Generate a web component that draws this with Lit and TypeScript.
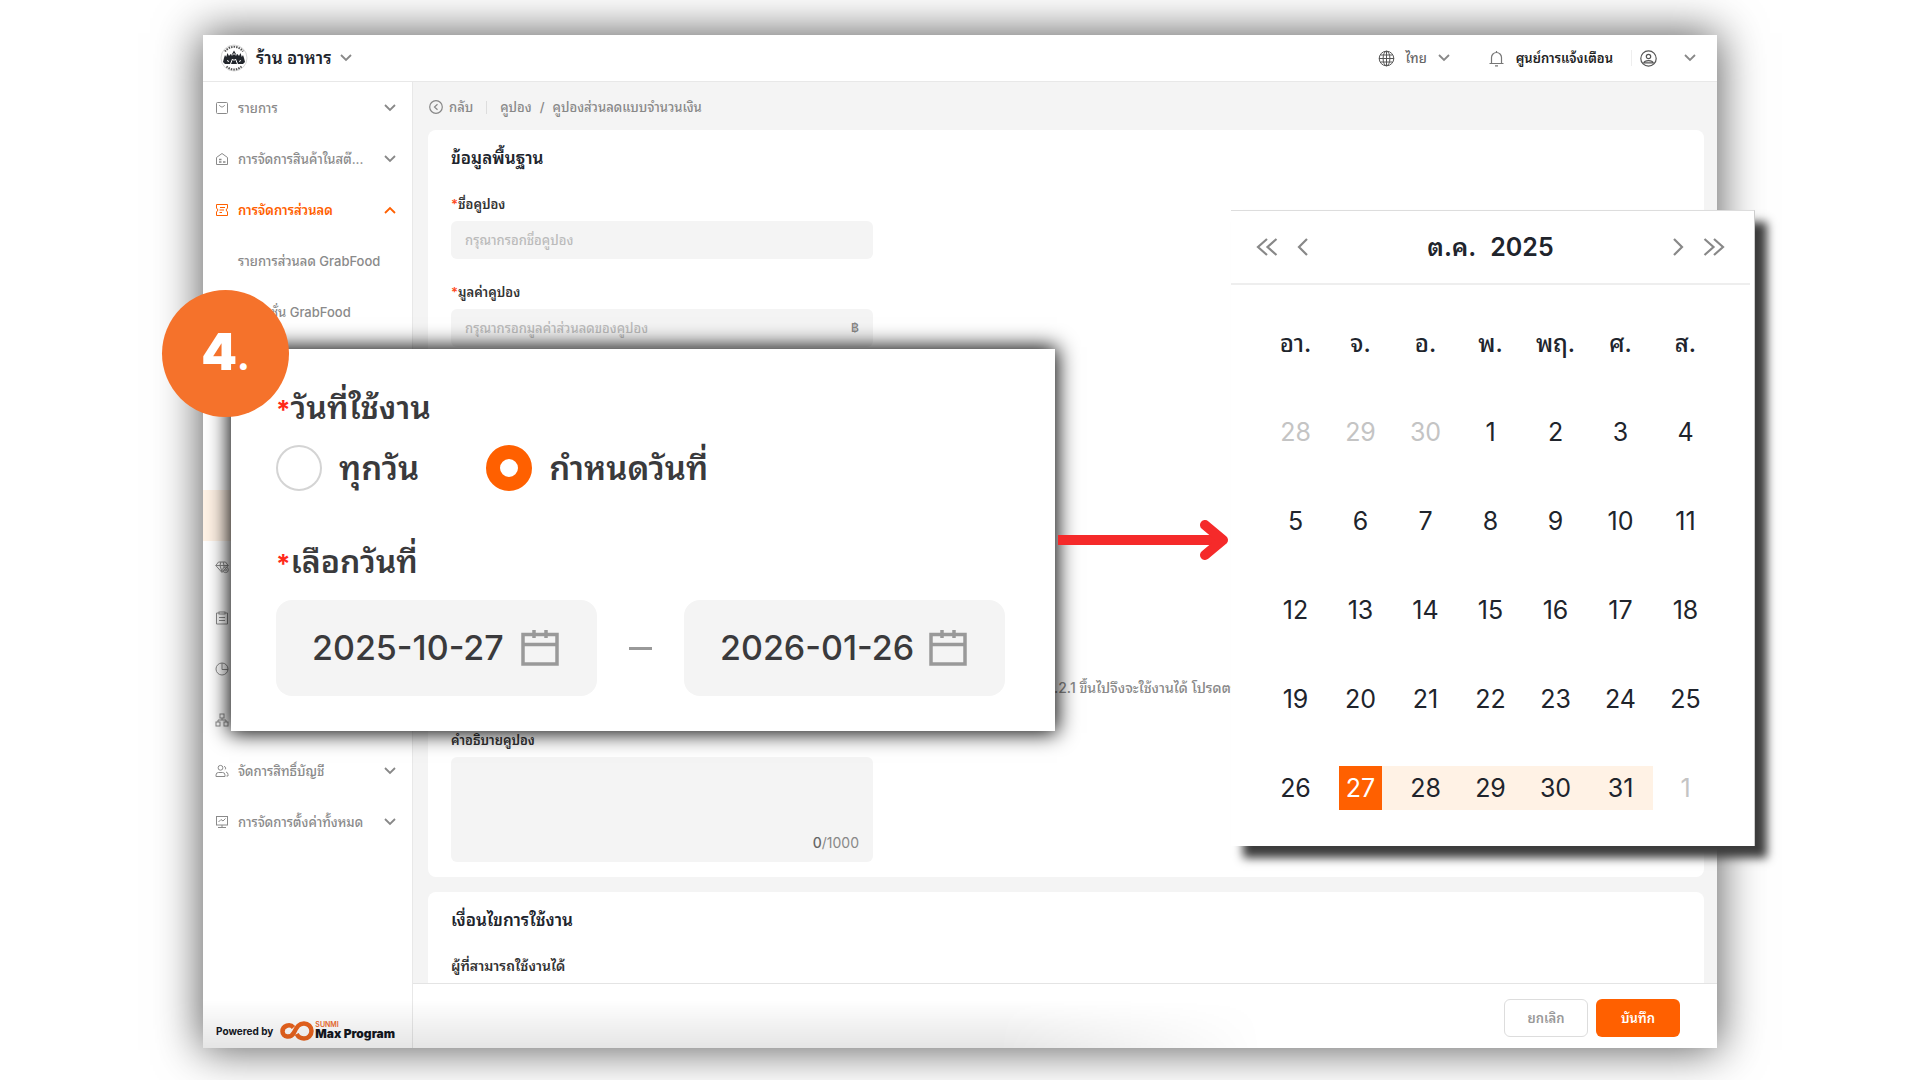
import { LitElement, html, css, svg, nothing } from "lit";
import type { TemplateResult } from "lit";
import { customElement, state } from "lit/decorators.js";
import { classMap } from "lit/directives/class-map.js";

const icon = (cls: string, box: string, body: unknown) =>
  html`<svg class=${cls} viewBox=${box} aria-hidden="true" fill="none" stroke="currentColor">${body}</svg>`;

const chevron = (up = false) =>
  icon("chevron", "0 0 12 8", svg`<path d=${up ? "M1 7l5-5 5 5" : "M1 1l5 5 5-5"} stroke-width="1.8"/>`);

const glyphs: Record<string, unknown> = {
  bag: svg`<rect x="1.500" y="1.500" width="11" height="11" rx="1"/><path d="M4.500 4c.4 2.600 4.600 2.600 5 0"/>`,
  store: svg`<path d="M1.500 5.500 7 1.500l5.500 4v7h-11z" stroke-linejoin="round"/><path d="M4 7.500h2.500M4 10h2.500M8 10h2.500" stroke-width="1.600"/>`,
  ticket: svg`<path d="M1.500 1.500h11V5l-1.500 2 1.500 2v3.500h-11V9L3 7 1.500 5z"/><path d="M5 4.500h5M4.500 7h4.500M4.500 9.500h2.500"/>`,
  gem: svg`<path d="M7 12.500.8 5.500 3.500 2h7l2.700 3.500zM.8 5.500h12.400M5 5.500 7 12M9 5.500V7M5 5.500 5.800 2M9 5.500 8.200 2"/><circle cx="10.500" cy="9.800" r="2.800"/><circle cx="10.500" cy="9.800" r="1"/>`,
  clipboard: svg`<path d="M4 2H1.500v11h11V2H10"/><rect x="4" y="1" width="6" height="2"/><path d="M4 6.500h6M4 9.500h6"/>`,
  pie: svg`<circle cx="7" cy="7" r="6"/><path d="M7 1v6.500h6"/>`,
  tree: svg`<rect x="5" y="1" width="4" height="4"/><rect x="1" y="9" width="4" height="4"/><rect x="9" y="9" width="4" height="4"/><path d="M7 5v2M3 9V7h8v2"/>`,
  users: svg`<circle cx="5.500" cy="3.800" r="2.400"/><path d="M1 12.500V11q0-2.500 2.500-2.500h4Q10 8.500 10 11v1.500zM9 2.500a1.700 1.700 0 0 1 .8 3.200M11 8q2 .5 2 2.500v1.500h-1.500"/>`,
  screen: svg`<rect x="1.500" y="1.500" width="11" height="8.500"/><path d="M3.500 7 6 4.500l2 1.500 2.500-2.500M7 10v2.500M3 12.500h8"/>`,
};

interface NavItem {
  glyph?: string;
  label?: string;
  open?: boolean;
  child?: boolean;
  current?: boolean;
}

const NAV: NavItem[] = [
  { glyph: "bag", label: "รายการ" },
  { glyph: "store", label: "การจัดการสินค้าในสต๊..." },
  { glyph: "ticket", label: "การจัดการส่วนลด", open: true },
  { label: "รายการส่วนลด GrabFood", child: true },
  { label: "โปรโมชั่น GrabFood", child: true },
  { child: true },
  { child: true },
  { child: true },
  { child: true, current: true },
  { glyph: "gem" },
  { glyph: "clipboard" },
  { glyph: "pie" },
  { glyph: "tree" },
  { glyph: "users", label: "จัดการสิทธิ์บัญชี" },
  { glyph: "screen", label: "การจัดการตั้งค่าทั้งหมด" },
];

const WEEKDAYS = ["อา.", "จ.", "อ.", "พ.", "พฤ.", "ศ.", "ส."];

/** Weeks of October 2025, with the neighbouring months' days marked as outside. */
const WEEKS = Array.from({ length: 5 }, (_, w) =>
  Array.from({ length: 7 }, (_, d) => {
    const n = w * 7 + d - 2;
    if (n < 1) return { day: 30 + n, outside: true };
    if (n > 31) return { day: n - 31, outside: true };
    return { day: n, outside: false };
  })
);

@customElement("app-root")
export class AppRoot extends LitElement {
  @state() private start = 27;
  @state() private mode = "range";

  static styles = css`
    :host {
      display: block;
      font-family: "Inter", "Noto Sans Thai Looped", "Noto Sans Thai", "Noto Sans", sans-serif;
      font-size: 13px;
      line-height: 20px;
      color: #333;
    }
    *, *::before, *::after { box-sizing: border-box; }
    button, input, textarea { font: inherit; color: inherit; margin: 0; }
    button { border: 0; background: none; padding: 0; cursor: pointer; }
    a { color: inherit; text-decoration: none; }
    h2 { margin: 0; font-size: 17px; line-height: 28px; font-weight: 600; color: #20242c; }
    svg { display: block; flex: none; }

    .stage {
      position: relative;
      height: 100vh;
      padding: 35px 203px 32px;
      overflow: hidden;
      background: #fff;
    }
    .window {
      position: relative;
      display: flex;
      flex-direction: column;
      height: 100%;
      background: #fff;
      box-shadow: 0 0 42px 2px rgba(0, 0, 0, 0.64);
    }
    .window::after {
      content: "";
      position: absolute;
      inset: auto 30% 0 0;
      height: 48px;
      background: linear-gradient(rgba(0, 0, 0, 0), rgba(0, 0, 0, 0.1));
      mask-image: linear-gradient(90deg, #000 75%, transparent);
      pointer-events: none;
    }

    .topbar {
      display: flex;
      align-items: center;
      justify-content: space-between;
      height: 47px;
      padding: 0 21px 0 17px;
      border-bottom: 1px solid #e8e8e8;
    }
    .shop, .tools, .tool { display: flex; align-items: center; }
    .shop { gap: 8px; font-size: 17px; font-weight: 600; color: #20242c; }
    .avatar { width: 28px; height: 28px; }
    .chevron { width: 12px; height: 8px; color: #888; }
    .tool { gap: 11px; font-size: 13px; font-weight: 500; }
    .tools { gap: 38px; color: #666; }
    .alerts { color: #222; font-weight: 600; }
    .account { gap: 27px; padding-left: 8px; border-left: 1px solid #eee; height: 16px; }
    .near { display: flex; gap: 18px; align-items: center; }
    .glyph-17 { width: 17px; height: 17px; color: #555; }

    .body { display: flex; flex: 1; min-height: 0; }
    .sidebar {
      display: flex;
      flex-direction: column;
      justify-content: space-between;
      width: 210px;
      flex: none;
      border-right: 1px solid #e8e8e8;
    }
    .nav { list-style: none; margin: 0; padding: 0; }
    .nav-link {
      display: flex;
      align-items: center;
      gap: 9px;
      width: 100%;
      height: 51px;
      padding: 0 16px 0 12px;
      font-weight: 500;
      color: #8a8a8a;
      white-space: nowrap;
    }
    .nav-link .label { flex: 1; text-align: left; }
    .nav-link.open, .nav-link.open .chevron { color: #ff6000; }
    .nav-link.open { font-weight: 600; }
    .nav-link.child { padding-left: 35px; }
    .nav-link.current { background: #fff2e5; }
    .nav-icon { width: 14px; height: 14px; }
    .powered {
      display: flex;
      align-items: center;
      gap: 7px;
      padding: 0 0 5px 13px;
      font-size: 10px;
      line-height: 24px;
      font-weight: 700;
      color: #15181f;
    }
    .brand { display: flex; align-items: center; gap: 1px; }
    .loop { width: 34px; height: 20px; }
    .brand-text { display: grid; font-size: 12px; line-height: 12px; font-weight: 900; }
    .brand-top { font-size: 7px; line-height: 6px; color: #ee6a2c; font-weight: 600; }

    .content { display: flex; flex-direction: column; flex: 1; min-width: 0; background: #f4f4f4; }
    .crumbs {
      display: flex;
      align-items: center;
      gap: 8px;
      height: 48px;
      padding: 2px 16px 0;
      color: #888;
      font-weight: 500;
      flex: none;
    }
    .back { display: flex; align-items: center; gap: 6px; }
    .back-icon { width: 14px; height: 14px; }
    .bar { width: 1px; height: 13px; margin: 0 5px; background: #ddd; }
    .scroller {
      display: flex;
      flex-direction: column;
      gap: 15px;
      flex: 1;
      min-height: 0;
      overflow: hidden;
      padding: 0 13px 0 15px;
    }
    .card { flex: none; padding: 14px 23px 15px; border-radius: 8px; background: #fff; }
    .field { display: flex; flex-direction: column; gap: 7px; width: 422px; }
    .field label { font-weight: 600; color: #333; }
    .req { color: #ff4a1c; }
    .first { margin-top: 22px; }
    .next { margin-top: 23px; }
    .box {
      display: flex;
      align-items: center;
      height: 38px;
      padding: 0 14px;
      border-radius: 6px;
      background: #f4f4f4;
      font-weight: 500;
    }
    .box input { flex: 1; border: 0; outline: 0; padding: 0; background: none; }
    input::placeholder { color: #bbb; opacity: 1; }
    .unit { color: #888; font-size: 12px; font-weight: 600; }
    .note {
      margin: 331px 0 0 603px;
      overflow: hidden;
      white-space: nowrap;
      color: #888;
      font-size: 14px;
      font-weight: 500;
    }
    .desc { margin-top: 32px; }
    .area { display: flex; flex-direction: column; height: 105px; padding: 9px 14px; border-radius: 6px; background: #f4f4f4; }
    .area textarea { flex: 1; border: 0; outline: 0; resize: none; background: none; padding: 0; }
    .count { align-self: flex-end; color: #888; font-size: 14px; }
    .count b { font-weight: 500; color: #666; }
    .who { margin: 22px 0 20px; font-size: 14px; font-weight: 600; }

    .actions {
      display: flex;
      justify-content: flex-end;
      gap: 8px;
      padding: 15px 37px 11px;
      border-top: 1px solid #e4e4e4;
      background: #fff;
      flex: none;
    }
    .btn { width: 84px; height: 38px; border-radius: 6px; font-weight: 600; }
    .cancel { border: 1px solid #ddd; color: #999; background: #fff; }
    .save { background: #ff6000; color: #fff; }

    .period {
      position: absolute;
      left: 231px;
      top: 349px;
      width: 824px;
      padding: 39px 50px 35px 45px;
      background: #fff;
      box-shadow: 0 0 20px 2px #000;
      color: #3a3a3c;
      font-size: 32px;
      line-height: 40px;
      font-weight: 600;
    }
    .period fieldset { border: 0; margin: 0; padding: 0; }
    .period legend { display: block; padding: 0; }
    .pick { display: block; }
    .period .req { color: #ff2a1a; font-size: 26px; line-height: 20px; font-weight: 700; }
    .radios { display: flex; gap: 67px; margin: 17px 0 51px; font-size: 33px; }
    .radio { display: flex; align-items: center; gap: 17px; height: 46px; }
    .radio input {
      appearance: none;
      width: 46px;
      height: 46px;
      border: 2px solid #d4d4d4;
      border-radius: 50%;
      background: #fff;
    }
    .radio input:checked { border: 14px solid #ff6000; }
    .dates { display: flex; align-items: center; justify-content: space-between; margin-top: 18px; }
    .date {
      display: flex;
      align-items: center;
      gap: 12px;
      width: 321px;
      height: 96px;
      padding: 0 38px 0 36px;
      border-radius: 16px;
      background: #f4f4f4;
      font-size: 34px;
      font-weight: 500;
    }
    .date input { flex: 1; min-width: 0; border: 0; outline: 0; padding: 0; background: none; }
    .date-icon { width: 38px; height: 38px; color: #999; }
    .dash { width: 23px; height: 3px; background: #999; }

    .step {
      position: absolute;
      left: 162px;
      top: 290px;
      display: flex;
      align-items: baseline;
      justify-content: center;
      width: 127px;
      height: 127px;
      border-radius: 50%;
      background: #f5722b;
      color: #fff;
      font-size: 51px;
      line-height: 124px;
      font-weight: 900;
    }
    .dot { font-size: 34px; }
    .arrow { position: absolute; left: 1058px; top: 520px; width: 172px; height: 40px; color: #f52a2a; }

    .calendar {
      position: absolute;
      left: 1231px;
      top: 210px;
      width: 524px;
      padding-bottom: 14px;
      background: #fff;
      border-top: 1px solid #ddd;
      border-right: 1px solid #ccc;
      box-shadow: 12px 12px 9px #3c3c3c;
      color: #20242c;
      font-size: 25px;
      line-height: 32px;
    }
    .cal-head {
      display: flex;
      align-items: center;
      justify-content: space-between;
      height: 74px;
      margin-right: 4px;
      padding: 0 25px;
      border-bottom: 2px solid #eee;
    }
    .cal-nav { display: flex; gap: 19px; color: #888; }
    .step-one { width: 12px; height: 18px; }
    .step-two { width: 22px; height: 18px; }
    .cal-title { display: flex; gap: 14px; font-weight: 600; }
    table { width: 455px; margin: 16px 0 0 32px; border-collapse: collapse; table-layout: fixed; }
    th { height: 86px; padding: 0; font-weight: 500; font-size: 24px; }
    td { height: 89px; padding: 0; }
    .day { display: block; width: 100%; height: 44px; font-weight: 400; }
    .day.outside { color: #c4c4c4; }
    .day.in-range { background: #fff2e5; }
    .day.chosen { background: linear-gradient(90deg, transparent 11px, #ff6000 11px 54px, #fff2e5 54px); color: #fff; }
  `;

  private navRow(item: NavItem): TemplateResult {
    const cls = { "nav-link": true, open: !!item.open, child: !!item.child, current: !!item.current };
    return html`<li>
      <button type="button" class=${classMap(cls)}>
        ${item.glyph ? icon("nav-icon", "0 0 14 14", glyphs[item.glyph]) : nothing}
        <span class="label">${item.label ?? nothing}</span>
        ${item.label && !item.child ? chevron(item.open) : nothing}
      </button>
    </li>`;
  }

  private dayCell(day: number, outside: boolean): TemplateResult {
    const cls = {
      day: true,
      outside,
      chosen: !outside && day === this.start,
      "in-range": !outside && day > this.start,
    };
    return html`<td>
      <button type="button" class=${classMap(cls)} @click=${() => { if (!outside) this.start = day; }}>${day}</button>
    </td>`;
  }

  private dateBox(id: string, label: string, value: string): TemplateResult {
    return html`<div class="date">
      <input id=${id} aria-label=${label} .value=${value} />
      ${icon("date-icon", "0 0 38 38", svg`<path d="M2 5.500h34v29.500H2zM2 15.500h34" stroke-width="3.500"/><path d="M13 1v8M25 1v8" stroke-width="3.500"/>`)}
    </div>`;
  }

  private topbar(): TemplateResult {
    return html`<header class="topbar">
      <button type="button" class="shop">
        <svg class="avatar" viewBox="0 0 28 28" aria-hidden="true">
          <circle cx="14" cy="14" r="13" fill="#fff" stroke="#ccc" stroke-width=".8"/>
          <path d="M5 7.500A11 11 0 0 1 23 7.500" fill="none" stroke="#555" stroke-width="2" stroke-dasharray="1.500 1"/>
          <path d="M6.500 22.500a11 11 0 0 0 15 0" fill="none" stroke="#555" stroke-width="2" stroke-dasharray="1.500 1"/>
          <path d="M3 18l1-4 1-3 1.200 2L7.500 9l1.500 3 1.500-2 1 1L14 6.500 16.500 11l1-1 1.500 2 1.500-3 1.300 4 1.200-2 1 3 1 4-2 2H5z" fill="#22262c"/>
          <path d="M10.500 20l2-5 1.500 1.500 1.500-1.500 2 5M12 11.500l2-2 2 2M7 16.500l2 1M19 17.500l2-1" fill="none" stroke="#fff"/>
        </svg>
        <span>ร้าน อาหาร</span>
        ${chevron()}
      </button>
      <div class="tools">
        <button type="button" class="tool">
          ${icon("glyph-17", "0 0 17 17", svg`<circle cx="8.500" cy="8.500" r="7.300"/><ellipse cx="8.500" cy="8.500" rx="3.400" ry="7.300"/><path d="M8.500 1v15M1 8.500h15M2.300 5h12.400M2.300 12h12.400"/>`)}
          <span>ไทย</span>
          ${chevron()}
        </button>
        <div class="near">
          <button type="button" class="tool alerts">
            ${icon("glyph-17", "0 0 17 17", svg`<path d="M3.500 13.500V7.500a5 5 0 0 1 10 0v6M1.500 13.500h14M8.500 1v1.500M7 15.800h3" stroke="#777" stroke-width="1.200"/>`)}
            <span>ศูนย์การแจ้งเตือน</span>
          </button>
          <button type="button" class="tool account" aria-label="บัญชี">
            ${icon("glyph-17", "0 0 17 17", svg`<circle cx="8.500" cy="8.500" r="7.700" stroke-width="1.200"/><circle cx="8.500" cy="6.500" r="2.200" stroke-width="1.200"/><path d="M3.800 12.800c1-3 8.400-3 9.400 0z" stroke-width="1.200"/>`)}
            ${chevron()}
          </button>
        </div>
      </div>
    </header>`;
  }

  private form(): TemplateResult {
    return html`<div class="scroller">
      <section class="card">
        <h2>ข้อมูลพื้นฐาน</h2>
        <div class="field first">
          <label for="name"><span class="req">*</span>ชื่อคูปอง</label>
          <div class="box"><input id="name" placeholder="กรุณากรอกชื่อคูปอง" /></div>
        </div>
        <div class="field next">
          <label for="amount"><span class="req">*</span>มูลค่าคูปอง</label>
          <div class="box">
            <input id="amount" placeholder="กรุณากรอกมูลค่าส่วนลดของคูปอง" /><span class="unit">฿</span>
          </div>
        </div>
        <div class="note">.2.1 ขึ้นไปจึงจะใช้งานได้ โปรดตรวจสอบ</div>
        <div class="field desc">
          <label for="desc">คำอธิบายคูปอง</label>
          <div class="area">
            <textarea id="desc"></textarea>
            <span class="count"><b>0</b>/1000</span>
          </div>
        </div>
      </section>
      <section class="card">
        <h2>เงื่อนไขการใช้งาน</h2>
        <div class="who">ผู้ที่สามารถใช้งานได้</div>
      </section>
    </div>`;
  }

  private period(): TemplateResult {
    const option = (value: string, label: string) => html`<label class="radio">
      <input type="radio" name="mode" .checked=${this.mode === value} @change=${() => { this.mode = value; }} />${label}
    </label>`;
    return html`<section class="period">
      <fieldset>
        <legend><span class="req">*</span>วันที่ใช้งาน</legend>
        <div class="radios">${option("all", "ทุกวัน")}${option("range", "กำหนดวันที่")}</div>
      </fieldset>
      <label class="pick" for="from"><span class="req">*</span>เลือกวันที่</label>
      <div class="dates">
        ${this.dateBox("from", "วันที่เริ่ม", `2025-10-${String(this.start).padStart(2, "0")}`)}
        <span class="dash"></span>
        ${this.dateBox("to", "วันที่สิ้นสุด", "2026-01-26")}
      </div>
    </section>`;
  }

  private calendar(): TemplateResult {
    const one = (d: string) => icon("step-one", "0 0 12 18", svg`<path d=${d} stroke-width="2.200"/>`);
    const two = (d: string) => icon("step-two", "0 0 22 18", svg`<path d=${d} stroke-width="2.200"/>`);
    return html`<section class="calendar">
      <div class="cal-head">
        <div class="cal-nav">
          <button type="button" aria-label="ปีก่อน">${two("M11 1 2 9l9 8M20.500 1l-9 8 9 8")}</button>
          <button type="button" aria-label="เดือนก่อน">${one("M10 1 2 9l8 8")}</button>
        </div>
        <div class="cal-title"><span>ต.ค.</span><span>2025</span></div>
        <div class="cal-nav">
          <button type="button" aria-label="เดือนถัดไป">${one("M2 1l8 8-8 8")}</button>
          <button type="button" aria-label="ปีถัดไป">${two("M1.500 1l9 8-9 8M11 1l9 8-9 8")}</button>
        </div>
      </div>
      <table>
        <thead><tr>${WEEKDAYS.map((d) => html`<th scope="col">${d}</th>`)}</tr></thead>
        <tbody>
          ${WEEKS.map((w) => html`<tr>${w.map((c) => this.dayCell(c.day, c.outside))}</tr>`)}
        </tbody>
      </table>
    </section>`;
  }

  render() {
    return html`<div class="stage">
      <div class="window">
        ${this.topbar()}
        <div class="body">
          <aside class="sidebar">
            <ul class="nav">${NAV.map((n) => this.navRow(n))}</ul>
            <div class="powered">
              <span>Powered by</span>
              <span class="brand">
                <svg class="loop" viewBox="0 0 34 20" aria-hidden="true" fill="none" stroke="#ea641e" stroke-width="4.500">
                  <path d="M13.500 6.500C10 2.500 2.500 4.500 2.500 10.500S11 17.500 14 11.500 19 2.500 24 2.500a7.500 7.500 0 0 1 0 15c-3.500 0-6-2-7.300-4.500"/>
                </svg>
                <span class="brand-text"><span class="brand-top">SUNMI</span><span>Max Program</span></span>
              </span>
            </div>
          </aside>
          <main class="content">
            <nav class="crumbs">
              <a class="back" href="#">
                ${icon("back-icon", "0 0 14 14", svg`<circle cx="7" cy="7" r="6.300" stroke-width="1.200"/><path d="M8.500 4.300 5.500 7l3 2.700" stroke-width="1.200"/>`)}
                <span>กลับ</span>
              </a>
              <span class="bar"></span>
              <a href="#">คูปอง</a><span>/</span><span>คูปองส่วนลดแบบจำนวนเงิน</span>
            </nav>
            ${this.form()}
            <footer class="actions">
              <button type="button" class="btn cancel">ยกเลิก</button>
              <button type="button" class="btn save">บันทึก</button>
            </footer>
          </main>
        </div>
      </div>
      ${this.period()}
      <svg class="arrow" viewBox="0 0 172 40" aria-hidden="true" fill="none" stroke="currentColor" stroke-width="10">
        <path d="M0 20h162"/><path d="M147 5l18 15-18 15" stroke-linecap="round" stroke-linejoin="round"/>
      </svg>
      ${this.calendar()}
      <div class="step"><span>4</span><span class="dot">.</span></div>
    </div>`;
  }
}
